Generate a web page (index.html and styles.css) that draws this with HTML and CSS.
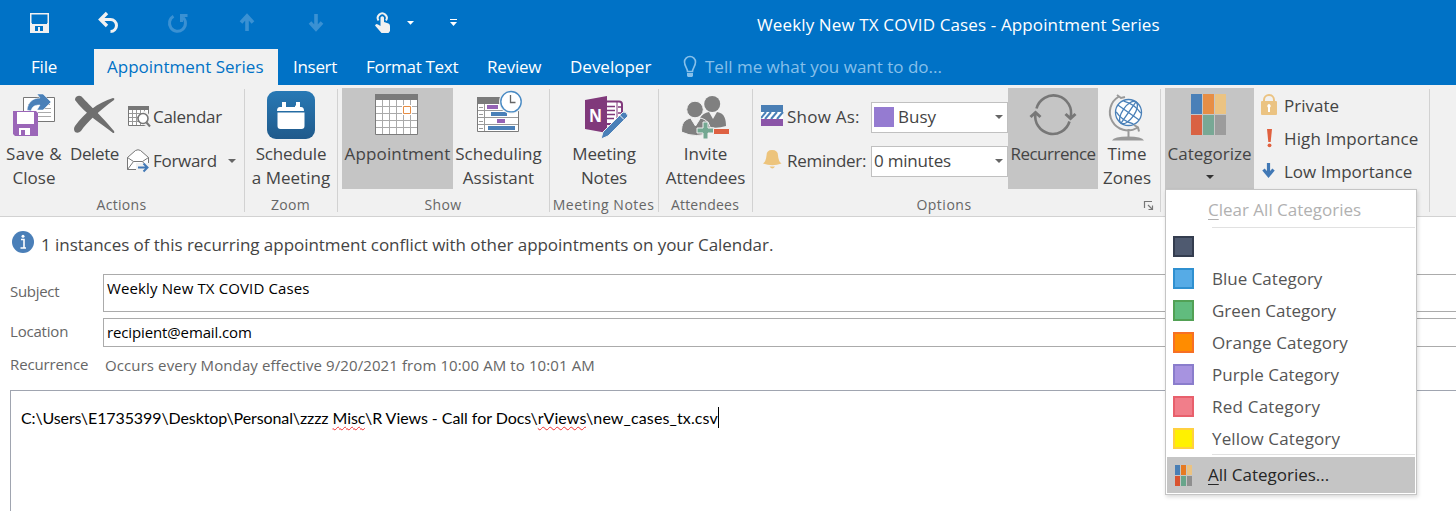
FILE: index.html
```
<!DOCTYPE html>
<html lang="en">
<head>
<meta charset="utf-8">
<title>Weekly New TX COVID Cases - Appointment Series</title>
<link rel="stylesheet" href="styles.css">
</head>
<body>
<header class="titlebar">
  <div class="quick">
    <svg width="70" height="46" viewBox="0 0 70 46"><path d="M31 14h17v18H31z" fill="none" stroke="#f1f1f1" stroke-width="2"/><path d="M31 24h17v8H31z" fill="#f1f1f1"/><path d="M35 26h8v5h-3v-4h-2v4h-3z" fill="#0072c6"/><path d="M31.500 14.500h16v8l-1 1.500h-14l-1-1.500z" fill="#0072c6"/></svg>
    <svg width="70" height="46" viewBox="70 0 70 46"><path d="M101 19.500h9.500a6 6 0 0 1 0 12" fill="none" stroke="#f1f1f1" stroke-width="3"/><path d="M107 13l-6.500 6.500L107 26" fill="none" stroke="#f1f1f1" stroke-width="3.400"/></svg>
    <svg width="70" height="46" viewBox="140 0 70 46"><g fill="none" stroke="#3a91d3" stroke-width="3"><path d="M173.500 16.300a8 8 0 1 0 9.500 1.200"/><path d="M187.500 15.500h-6V22"/></g></svg>
    <svg width="70" height="46" viewBox="210 0 70 46"><path d="M247 31V16M241 22.500l6-6.500 6 6.500" fill="none" stroke="#3a91d3" stroke-width="3.600"/></svg>
    <svg width="70" height="46" viewBox="280 0 70 46"><path d="M316 14v15M310 22.500l6 6.500 6-6.500" fill="none" stroke="#3a91d3" stroke-width="3.600"/></svg>
    <svg width="75" height="46" viewBox="350 0 75 46"><path d="M378.500 20.500a4.500 4.500 0 1 1 7.500 0" fill="none" stroke="#f1f1f1" stroke-width="2"/><path d="M380.500 17.500q1.800-2.500 3.500 0V22l4.500 1.500q1.500.8 1.500 2.500v5l-1.500 2h-7L375 25.500q1-2.500 3-1l2.500 1.500z" fill="#f1f1f1"/><path d="M407 21h7l-3.500 3.800z" fill="#fff"/></svg>
    <svg width="40" height="46" viewBox="425 0 40 46"><path d="M450 19.500h7" stroke="#fff"/><path d="M450 22h7l-3.500 4z" fill="#fff"/></svg>
  </div>
  <h1 class="title s1">Weekly New TX COVID Cases - Appointment Series</h1>
</header>
<nav class="tabs">
  <span class="tab file t2">File</span>
  <span class="tab active">Appointment Series</span>
  <span class="tab insert t3">Insert</span>
  <span class="tab format t3">Format Text</span>
  <span class="tab review t2">Review</span>
  <span class="tab dev">Developer</span>
  <svg class="bulb" width="14" height="24" viewBox="0 0 14 24"><path d="M4.500 16.500c0-3-3-5-3-9.500a5.500 5.500 0 0 1 11 0c0 4.500-3 6.500-3 9.500z" fill="none" stroke="#87c0ea" stroke-width="1.600"/><path d="M4 18h6v3l-1 1H5l-1-1z" fill="#87c0ea"/></svg>
  <span class="tab tell">Tell me what you want to do...</span>
</nav>

<section class="ribbon">
  <div class="group actions">
    <div class="tools">
      <button class="big save">
        <svg width="68" height="53" viewBox="0 89 68 53"><path d="M23.500 97.500h31v24h-31z" fill="#fff" stroke="#777"/><path d="M28 104.500h22M38 108.500h13M38 112.500h13M38 116.500h13" stroke="#aaa"/><path d="M27 110c1-8 6-12 13-12l-3-4h6l8 8-8 8h-6l3-5c-6 0-8 2-9 6z" fill="#4a80b8" stroke="#fff" stroke-width=".5"/><path d="M13 111h23l2 2v23H15l-2-2z" fill="#9b66b8"/><path d="M17 112h17v12H17z" fill="#fff"/><path d="M19 128h11v7H19z" fill="#fff"/><path d="M21 130h4v5h-4z" fill="#9b66b8"/></svg>
        <span class="s4">Save &amp;</span><span>Close</span>
      </button>
      <button class="big delete">
        <svg width="53" height="53" viewBox="68 89 53 53"><path d="M76 97q4-3 7 1c8 9 16 15 31 33q1 2-1 2C103 125 84 113 75 100q0-2 1-3z" fill="#6f6f6f"/><path d="M113 98q2 0 1 2C99 111 87 122 81 131q-3 3-6 1-2-3 0-6C85 112 98 103 113 98z" fill="#6f6f6f"/></svg>
        <span class="t4">Delete</span>
      </button>
      <div class="stack">
        <button class="small"><svg width="27" height="44" viewBox="126 95 27 44"><path d="M128.500 107.500h20v18h-20z" fill="#fff" stroke="#777"/><path d="M128 106h21v4h-21z" fill="#777"/><path d="M132.500 110v15M136.500 110v15M140.500 110v15M144.500 110v15M129 113.500h19M129 117.500h19M129 121.500h19" stroke="#999"/><path d="M143 111a7 7 0 0 1 7 7v10l-8-4z" fill="#f1f1f1"/><circle cx="143" cy="118.500" r="5" fill="#fff" stroke="#777" stroke-width="1.600"/><path d="M146.500 122.500l3.500 4" stroke="#777" stroke-width="2"/></svg><span class="t3">Calendar</span></button>
        <button class="small"><svg width="27" height="44" viewBox="126 139 27 44"><path d="M127.500 157.500l8-7q2.500-1.500 5 0l8 7v12h-21z" fill="#fff" stroke="#777"/><path d="M127.500 157.500l6 4h9l6-4M127.500 169.500l6-8M142.500 161.500l6 8" fill="none" stroke="#777"/><path d="M136 163h15v9h-15z" fill="#f1f1f1"/><path d="M138 167.500h9M143.500 163.500l4 4-4 4" fill="none" stroke="#4178b5" stroke-width="2"/></svg><span class="t3">Forward</span><i class="caret after"></i></button>
      </div>
    </div>
    <div class="label s3">Actions</div>
  </div>

  <div class="group zoom">
    <div class="tools">
      <button class="big">
        <svg width="60" height="53" viewBox="261 89 60 53"><defs><linearGradient id="z" x2="0" y2="1"><stop stop-color="#2879b5"/><stop offset="1" stop-color="#205a8b"/></linearGradient></defs><rect x="267" y="91" width="48" height="48" rx="9" fill="url(#z)"/><path d="M277 111q0-4 3-4h2v-1q2-2 4 0v1h9v-1q2-2 4 0v1h2q3 0 3 4zM277.500 112.500h27V126q0 3-3 3h-21q-3 0-3-3z" fill="#fff"/><path d="M282 102h4v6h-4zM296 102h4v6h-4z" fill="#fff"/></svg>
        <span class="t2">Schedule</span><span>a Meeting</span>
      </button>
    </div>
    <div class="label s3">Zoom</div>
  </div>

  <div class="group show">
    <div class="tools">
      <button class="big appt on">
        <svg width="60" height="53" viewBox="368 89 60 53"><path d="M375.500 94.500h42v40h-42z" fill="#fff" stroke="#7b7b7b"/><path d="M375 94h43v6h-43z" fill="#7b7b7b"/><path d="M382.500 100v34M389.500 100v34M396.500 100v34M403.500 100v34M410.500 100v34M376 106.500h41M376 113.500h41M376 120.500h41M376 127.500h41" stroke="#aaa"/><path d="M402 105h10v10h-10z" fill="#fff"/><path d="M403.500 106.500h7v7h-7z" fill="#fff" stroke="#e68d44"/></svg>
        <span class="s1">Appointment</span>
      </button>
      <button class="big sched">
        <svg width="60" height="53" viewBox="469 89 60 53"><path d="M477.500 97.500h41v34h-41z" fill="#fff" stroke="#7b7b7b"/><path d="M477 97h42v7h-42z" fill="#7b7b7b"/><path d="M484.500 104v27M478 110.500h40M478 117.500h40M478 124.500h40M479 107.500h4M479 114.500h4M479 121.500h4M479 128.500h4" stroke="#999"/><path d="M487 105h11v4h-11zM497 119h8v4h-8z" fill="#9563b5"/><path d="M491 112h16v4h-16zM488 126h27v4h-27z" fill="#4a80b8"/><circle cx="511" cy="101.700" r="12" fill="#f1f1f1"/><circle cx="511" cy="101.700" r="10.200" fill="#fff" stroke="#4a8bc4" stroke-width="1.400"/><path d="M510.500 95v7.500h5" fill="none" stroke="#666" stroke-width="1.300"/></svg>
        <span>Scheduling</span><span>Assistant</span>
      </button>
    </div>
    <div class="label s3">Show</div>
  </div>

  <div class="group notes">
    <div class="tools">
      <button class="big">
        <svg width="60" height="53" viewBox="574 89 60 53"><path d="M605 101.500h14q3 0 3 3V116l-7 8h-10z" fill="#fff" stroke="#80397b" stroke-width="2"/><path d="M617 102v16" stroke="#80397b"/><path d="M605 106.500h10M605 110.500h10M605 114.500h10M605 118.500h9M618 107h5M618 113h5" stroke="#80397b" stroke-width="1.300"/><path d="M585 100l22-4v37l-22-4z" fill="#80397b"/><text x="589" y="121.500" font-size="18" font-weight="700" textLength="13" lengthAdjust="spacingAndGlyphs" fill="#fff">N</text><path d="M601 139l2-7 20-20q3-1 5 4l-20 20z" fill="#4a80b8" stroke="#f1f1f1"/><path d="M619 114.500l5 5" stroke="#fff"/></svg>
        <span class="t1">Meeting</span><span class="t1">Notes</span>
      </button>
    </div>
    <div class="label s5">Meeting Notes</div>
  </div>

  <div class="group attendees">
    <div class="tools">
      <button class="big">
        <svg width="60" height="53" viewBox="675 89 60 53"><g fill="#808080"><circle cx="712.200" cy="104" r="8"/><path d="M700 118q3-5 9-6l4 7 4-7c8 1 9 8 9 14q-12 4-22-1z"/><g stroke="#f1f1f1"><circle cx="695" cy="109.500" r="8.300"/><path d="M681.500 132c0-8 2-12 9-14l5 8 5-8c7 2 10 6 10 14q-14 7-29 0z"/></g></g><path d="M703 123h5v6h6v5h-6v6h-5v-6h-6v-5h6z" transform="translate(0 -1)" fill="#74a892" stroke="#f1f1f1"/><path d="M713.500 128.500h16v6h-16z" fill="#de6142" stroke="#f1f1f1"/></svg>
        <span>Invite</span><span class="t1">Attendees</span>
      </button>
    </div>
    <div class="label s2">Attendees</div>
  </div>

  <div class="group options">
    <div class="tools">
      <div class="fields">
        <svg width="26" height="44" viewBox="761 95 26 44"><path d="M761 105h22v7h-22z" fill="#4a7fb5"/><path d="M761 112h22v7h-22z" fill="#fff"/><path d="M761 118l5-6M765 119l6-7M771 119l6-7M777 119l6-7" stroke="#4a80b8" stroke-width="2"/><path d="M761 119h22v7h-22z" fill="#8b55a8"/></svg>
        <span class="s2">Show As:</span>
        <div class="select"><i class="busy"></i><span>Busy</span><i class="caret"></i></div>
        <svg width="26" height="44" viewBox="761 139 26 44"><path d="M763 163.500q3-2 3.500-8 0-5.500 5.500-5.500 6 0 6 5.500.5 6 3.500 8-9 3.500-18.500 0zM769.500 166.500h5.500q-2.500 4-5.500 0z" fill="#edc47c"/></svg>
        <span class="t3">Reminder:</span>
        <div class="select"><span class="t2">0 minutes</span><i class="caret"></i></div>
      </div>
      <button class="big recur on">
        <svg width="60" height="53" viewBox="1023 89 60 53"><g fill="none" stroke="#777"><path d="M1036.500 108.500a17.500 17.500 0 0 1 34 9M1069.500 121.500a17.500 17.500 0 0 1-34-8" stroke-width="2.600"/><path d="M1030.500 117l5-4.500 5 4.500M1065.500 114l5 4.500 5-4.500" stroke-width="3"/></g></svg>
        <span class="t5">Recurrence</span>
      </button>
      <button class="big zones">
        <svg width="58" height="53" viewBox="1098 89 58 53"><g fill="none" stroke="#4a80b8" stroke-width="1.300"><circle cx="1128.500" cy="112.500" r="13" fill="#fff"/><g transform="rotate(35 1128.500 112.500)"><ellipse cx="1128.500" cy="112.500" rx="6" ry="13"/><path d="M1128.500 99.500v26M1115.500 112.500h26M1118 106q10-4 21 0M1118 119q10 4 21 0"/></g></g><g fill="none" stroke="#999" stroke-width="2"><path d="M1119 96.500a18 18 0 1 0 18 31.500M1117 95l4 3 4-1M1134 125l4 2.500 1 4M1128.500 129v8"/></g><path d="M1112 141q2-4 16-4t16 4z" transform="translate(0 -.5)" fill="#999"/></svg>
        <span>Time</span><span>Zones</span>
      </button>
    </div>
    <div class="label center s5">Options<svg class="launch" width="11" height="11" viewBox="0 0 11 11"><path d="M1.500 8V1.500H9M5 5l4.500 4.500M9.500 5.500v4h-4" fill="none" stroke="#777" stroke-width="1.200"/></svg></div>
  </div>

  <div class="group tags">
    <div class="tools">
      <button class="big cat on">
        <svg width="60" height="53" viewBox="1180 89 60 53"><path d="M1191 94h11v20h-11z" fill="#4a80b8"/><path d="M1203 94h11v20h-11z" fill="#e78e45"/><path d="M1215 94h11v20h-11z" fill="#ebc382"/><path d="M1191 115h11v20h-11z" fill="#d96243"/><path d="M1203 115h11v20h-11z" fill="#78a895"/><path d="M1215 115h11v20h-11z" fill="#9c9c9c"/></svg>
        <span>Categorize</span><i class="caret dark"></i>
      </button>
      <div class="importance">
        <button class="small"><svg width="26" height="33" viewBox="1258 89 26 33"><path d="M1264 102v-2a5 5 0 0 1 10 0v2" fill="none" stroke="#ebc382" stroke-width="2"/><rect x="1261" y="101" width="16" height="14" rx="1" fill="#ebc382"/><path d="M1269 104a2 2 0 0 1 1 3.500v4.500h-2v-4.500a2 2 0 0 1 1-3.500z" fill="#fff"/></svg><span>Private</span></button>
        <button class="small"><svg width="26" height="33" viewBox="1258 122 26 33"><path d="M1267 129h5l-1.300 13h-2.400z" fill="#e0603e"/><circle cx="1269.500" cy="145.300" r="1.900" fill="#e0603e"/></svg><span class="s1">High Importance</span></button>
        <button class="small"><svg width="26" height="33" viewBox="1258 155 26 33"><path d="M1268.500 163v13M1263.500 169.500l5 6 5-6" fill="none" stroke="#4178b5" stroke-width="3.200"/></svg><span>Low Importance</span></button>
      </div>
    </div>
  </div>
</section>

<main class="form">
  <div class="notice"><svg width="22" height="22" viewBox="0 0 22 22"><circle cx="11" cy="11" r="11" fill="#4a7fb8"/><circle cx="11" cy="5.200" r="1.500" fill="#fff"/><path d="M9 8.500h3V17M8.500 17h5.500" fill="none" stroke="#fff" stroke-width="1.600"/></svg><span>1 instances of this recurring appointment conflict with other appointments on your Calendar.</span></div>
  <div class="row subject"><label>Subject</label><div class="input s1">Weekly New TX COVID Cases</div></div>
  <div class="row location"><label class="t2">Location</label><div class="input t1">recipient@email.com</div></div>
  <div class="row recurrence"><label class="t1">Recurrence</label><div class="when">Occurs every Monday effective 9/20/2021 from 10:00 AM to 10:01 AM</div></div>
  <div class="editor"><span class="folder">C:\Users\E1735399\Desktop\Personal\zzzz </span><span><u>Misc</u>\R Views - Call for Docs\</span><span class="filename"><u>rViews</u>\new_cases_tx.csv</span><i class="cursor"></i></div>
</main>

<div class="menu">
  <div class="item clear"><span><u>C</u>lear All Categories</span></div>
  <hr>
  <div class="item"><i class="swatch slate"></i></div>
  <div class="item"><i class="swatch blue"></i><span>Blue Category</span></div>
  <div class="item"><i class="swatch green"></i><span>Green Category</span></div>
  <div class="item"><i class="swatch orange"></i><span class="s1">Orange Category</span></div>
  <div class="item"><i class="swatch purple"></i><span>Purple Category</span></div>
  <div class="item"><i class="swatch red"></i><span class="s2">Red Category</span></div>
  <div class="item"><i class="swatch yellow"></i><span class="s1">Yellow Category</span></div>
  <hr class="last">
  <div class="item all"><svg width="17" height="21" viewBox="0 0 17 21"><path d="M0 0h5v10H0z" fill="#4a7fb5"/><path d="M6 0h5v10H6z" fill="#e67a22"/><path d="M12 0h5v10h-5z" fill="#ebc382"/><path d="M0 11h5v10H0z" fill="#d9532f"/><path d="M6 11h5v10H6z" fill="#68a58b"/><path d="M12 11h5v10h-5z" fill="#8f8f8f"/></svg><span><u>A</u>ll Categories...</span></div>
</div>
</body>
</html>
```
FILE: styles.css
```
* { box-sizing: border-box; }
body {
  margin: 0;
  width: 1456px;
  height: 511px;
  overflow: hidden;
  position: relative;
  background: #fff;
  color: #444;
  font: 17px/24px "Open Sans", "Noto Sans", sans-serif;
  white-space: nowrap;
}
svg { display: block; flex: none; }
button { border: 0; padding: 0; margin: 0; background: none; color: inherit; font: inherit; }

/* tracking steps */
.t1 { letter-spacing: -.13px; }
.t2 { letter-spacing: -.2px; }
.t3 { letter-spacing: -.3px; }
.t4 { letter-spacing: -.4px; }
.t5 { letter-spacing: -.5px; }
.s1 { letter-spacing: .13px; }
.s2 { letter-spacing: .22px; }
.s3 { letter-spacing: .32px; }
.s4 { letter-spacing: .4px; }
.s5 { letter-spacing: .5px; }

.titlebar { display: flex; height: 49px; background: #0072c6; color: #fff; }
.quick { display: flex; width: 757px; }
.title { margin: 0; font-size: 17px; font-weight: 400; line-height: 50px; }

.tabs { display: flex; align-items: center; height: 36px; background: #0072c6; color: #fff; }
.tab { line-height: 36px; }
.file { width: 63px; margin-left: 31px; }
.active { width: 184px; padding-left: 13px; background: #f1f1f1; color: #0072c6; }
.insert { width: 73px; margin-left: 15px; }
.format { width: 121px; }
.review { width: 83px; }
.dev { width: 113px; }
.bulb { margin-right: 8px; }
.tell { color: #87c0ea; }

.ribbon { display: flex; height: 132px; padding-top: 4px; background: #f1f1f1; border-bottom: 1px solid #d2d2d2; }
.group { flex: none; height: 123px; border-right: 1px solid #d2d2d2; }
.actions { width: 245px; }
.zoom { width: 93px; }
.show { width: 212px; }
.notes { width: 109px; }
.attendees { width: 94px; }
.options { width: 408px; }
.tags { width: 269px; }
.tools { display: flex; justify-content: center; height: 100px; }
.label { position: relative; text-align: center; font-size: 14px; line-height: 31px; color: #666; padding-right: 1px; }
.center { padding-right: 25px; }
.launch { position: absolute; right: 6px; top: 11px; }
.big { display: flex; flex-direction: column; align-items: center; flex: none; height: 100px; }
.on { margin-top: -1px; padding-top: 1px; height: 101px; background: #c5c5c5; }
.actions .tools, .options .tools, .show .tools, .tags .tools { justify-content: flex-start; }
.save { width: 68px; }
.delete { width: 53px; }
.stack { padding: 6px 0 0 5px; }
.small { display: flex; align-items: center; }
.caret { flex: none; border: 4px solid transparent; border-top-color: #666; border-bottom: 0; }
.after { margin-left: 11px; }
.show .tools { padding-left: 4px; }
.appt { width: 111px; }
.sched { width: 91px; }
.fields {
  display: grid;
  grid-template: 44px 44px / 26px 84px 137px;
  align-items: center;
  width: 255px;
  padding: 6px 0 0 8px;
}
.select { display: flex; align-items: center; height: 31px; padding: 0 4px 0 2px; border: 1px solid #c0c0c0; background: #fff; }
.select .caret { margin-left: auto; }
.busy { width: 20px; height: 20px; margin-right: 4px; background: #957bd1; }
.recur { width: 90px; }
.zones { width: 58px; }
.tags .tools { padding-left: 4px; }
.cat { width: 89px; }
.dark { margin-top: 9px; border-top-color: #333; }
.importance { padding-left: 4px; }

.form { padding: 14px 0 0 10px; }
.notice { display: flex; gap: 7px; padding-left: 2px; height: 43px; }
.notice span { line-height: 28px; letter-spacing: -.04px; }
.row { display: flex; font-size: 15px; color: #666; }
.row label { width: 93px; font-size: 15px; }
.input { flex: 1; padding-left: 3px; border: 1px solid #ababab; border-right: 0; color: #000; }
.subject { height: 38px; line-height: 27px; }
.subject label { line-height: 34px; letter-spacing: -.3px; }
.location { height: 29px; margin-top: 6px; line-height: 26px; }
.recurrence { height: 43px; line-height: 36px; }
.recurrence label { line-height: 35px; }
.when { padding-left: 2px; letter-spacing: .1px; }
.editor { display: flex; height: 130px; padding-left: 10px; border: 1px solid #a0a5b0; border-right: 0; font: 16px/54px Lato, sans-serif; letter-spacing: -.05px; color: #000; white-space: pre; }
.editor u { text-decoration: underline wavy #f03030 1px; text-underline-offset: 2px; }
.folder { letter-spacing: -.1px; }
.filename { letter-spacing: .12px; }
.cursor { width: 1px; height: 21px; margin-top: 16px; background: #000; }

.menu {
  position: absolute;
  left: 1165px;
  top: 189px;
  width: 252px;
  height: 306px;
  padding: 0 1px;
  border: 1px solid #c5c5c5;
  background: #fff;
  box-shadow: 1px 2px 4px rgba(0, 0, 0, .15);
  color: #555;
}
.item { display: flex; align-items: center; height: 32px; padding-left: 6px; }
.item u { text-underline-offset: 3px; text-decoration-thickness: 1px; }
.swatch { width: 21px; height: 21px; margin: 0 18px 1px 0; border: 2px solid; }
.clear { height: 39px; padding-left: 41px; color: #b1b1b1; margin-bottom: -2px; }
.menu hr { height: 1px; margin: 0 0 3px 45px; border: 0; background: #e1e1e1; }
.menu .last { margin: -1px 0 2px 45px; }
.all { height: 36px; gap: 16px; padding-left: 8px; background: #c5c5c5; color: #262626; }
.slate { background: #4f5a70; border-color: #343d4f; }
.blue { background: #56abe6; border-color: #2f90d0; }
.green { background: #61bc7e; border-color: #52a155; }
.orange { background: #ff8c00; border-color: #f77024; }
.purple { background: #a793e0; border-color: #8a7dcc; }
.red { background: #f17e8a; border-color: #e8606c; }
.yellow { background: #fff100; border-color: #ffd040; }
```
